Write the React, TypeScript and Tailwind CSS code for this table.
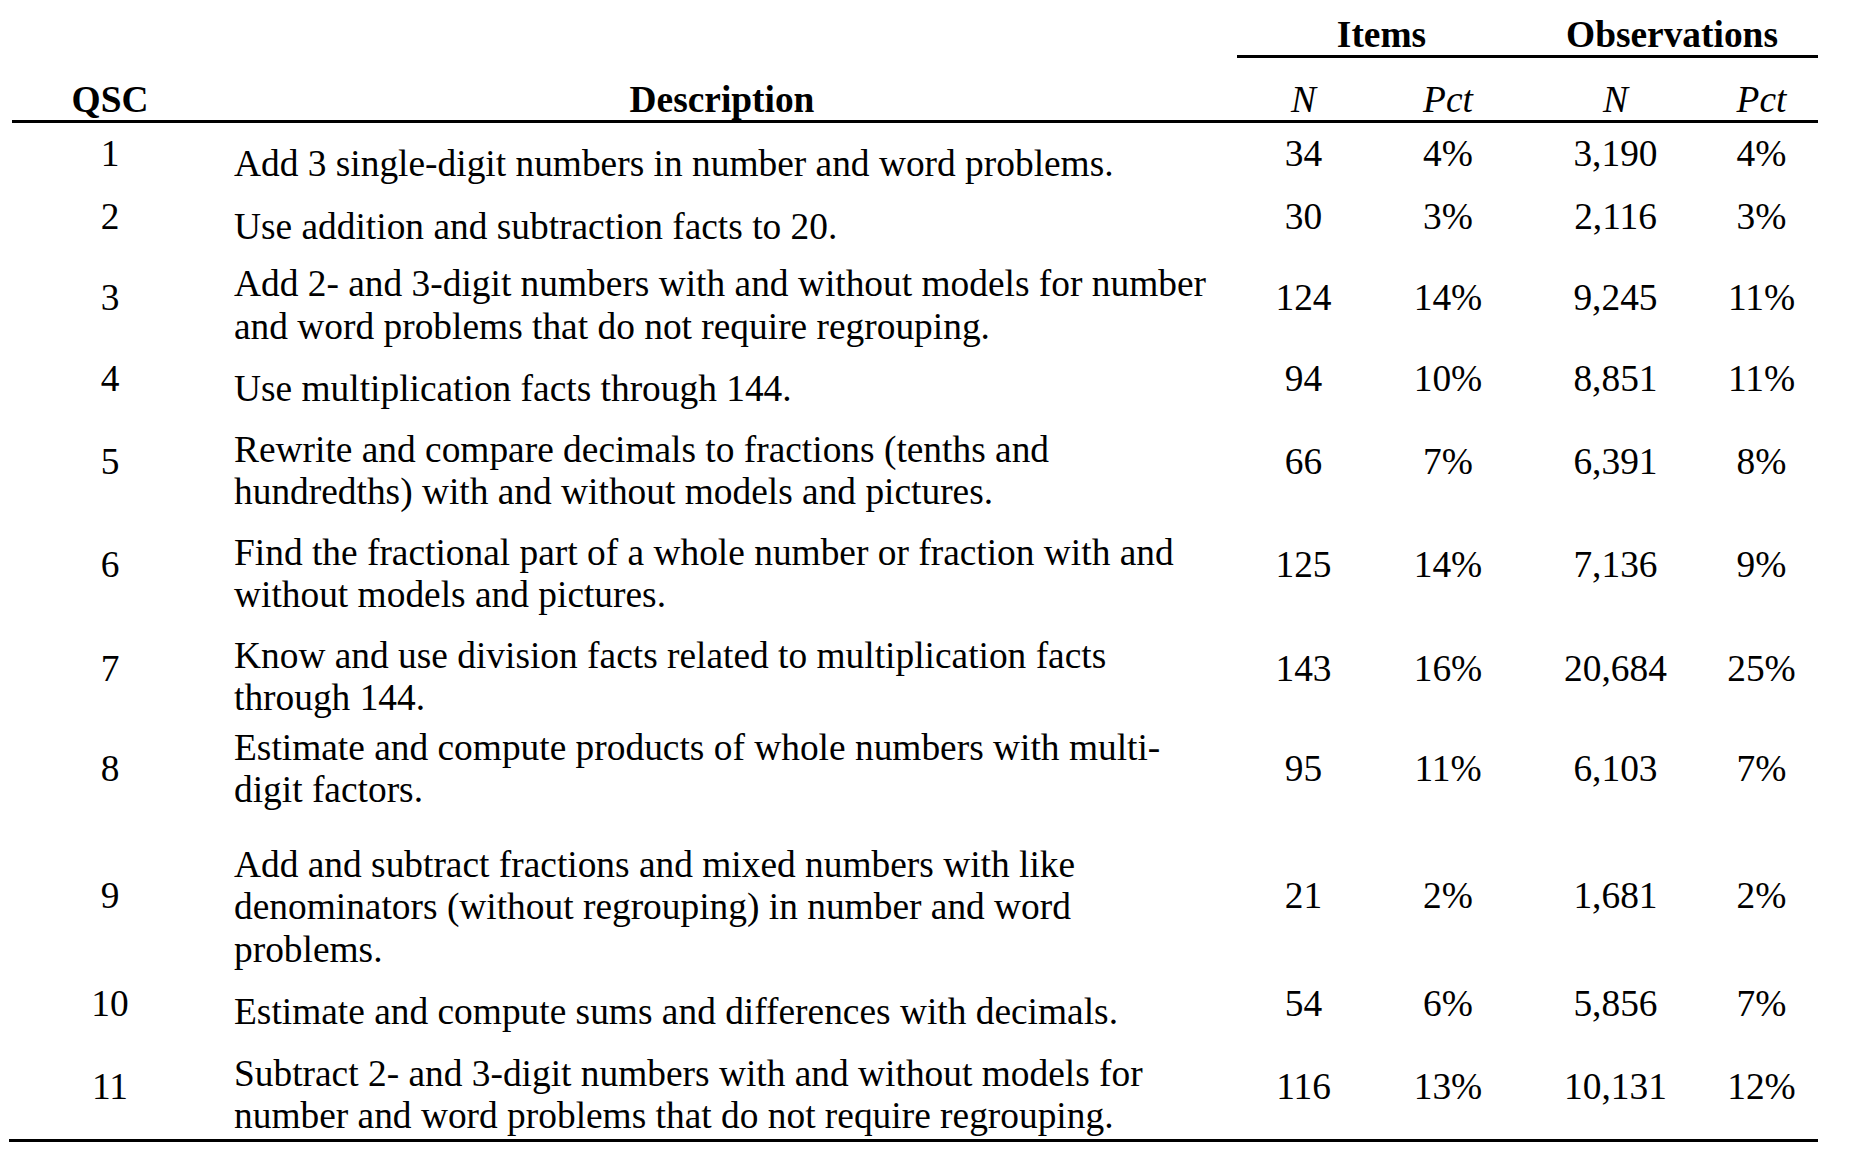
import React from 'react';

type Row = {
  qsc: string;
  lines: string[];
  vals: [string, string, string, string];
  descPad: string;
  numPad: string;
};

// padding-top per row, measured from the reference
const rows: Row[] = [
  { qsc: '1', lines: ['Add 3 single-digit numbers in number and word problems.'], vals: ['34', '4%', '3,190', '4%'], descPad: 'pt-[20px]', numPad: 'pt-[10px]' },
  { qsc: '2', lines: ['Use addition and subtraction facts to 20.'], vals: ['30', '3%', '2,116', '3%'], descPad: 'pt-[20px]', numPad: 'pt-[10px]' },
  {
    qsc: '3',
    lines: ['Add 2- and 3-digit numbers with and without models for number', 'and word problems that do not require regrouping.'],
    vals: ['124', '14%', '9,245', '11%'],
    descPad: 'pt-[15px]',
    numPad: 'pt-[29px]',
  },
  { qsc: '4', lines: ['Use multiplication facts through 144.'], vals: ['94', '10%', '8,851', '11%'], descPad: 'pt-[20px]', numPad: 'pt-[10px]' },
  {
    qsc: '5',
    lines: ['Rewrite and compare decimals to fractions (tenths and', 'hundredths) with and without models and pictures.'],
    vals: ['66', '7%', '6,391', '8%'],
    descPad: 'pt-[18px]',
    numPad: 'pt-[30px]',
  },
  {
    qsc: '6',
    lines: ['Find the fractional part of a whole number or fraction with and', 'without models and pictures.'],
    vals: ['125', '14%', '7,136', '9%'],
    descPad: 'pt-[18px]',
    numPad: 'pt-[30px]',
  },
  {
    qsc: '7',
    lines: ['Know and use division facts related to multiplication facts', 'through 144.'],
    vals: ['143', '16%', '20,684', '25%'],
    descPad: 'pt-[18px]',
    numPad: 'pt-[31px]',
  },
  {
    qsc: '8',
    lines: ['Estimate and compute products of whole numbers with multi-', 'digit factors.'],
    vals: ['95', '11%', '6,103', '7%'],
    descPad: 'pt-[7px]',
    numPad: 'pt-[28px]',
  },
  {
    qsc: '9',
    lines: ['Add and subtract fractions and mixed numbers with like', 'denominators (without regrouping) in number and word', 'problems.'],
    vals: ['21', '2%', '1,681', '2%'],
    descPad: 'pt-[32px]',
    numPad: 'pt-[63px]',
  },
  { qsc: '10', lines: ['Estimate and compute sums and differences with decimals.'], vals: ['54', '6%', '5,856', '7%'], descPad: 'pt-[20px]', numPad: 'pt-[12px]' },
  {
    qsc: '11',
    lines: ['Subtract 2- and 3-digit numbers with and without models for', 'number and word problems that do not require regrouping.'],
    vals: ['116', '13%', '10,131', '12%'],
    descPad: 'pt-[19px] pb-[1px]',
    numPad: 'pt-[32px]',
  },
];

const cols = 'grid grid-cols-[196px_1029px_133px_156px_179px_113px]';

export default function App() {
  return (
    <div className="w-[1853px] h-[1162px] bg-white text-black overflow-hidden font-['Liberation_Serif','Times_New_Roman',serif] text-[37.4px] leading-[42.5px]">
      <div className="ml-[12px] w-[1806px]">
        {/* group header */}
        <div className={`${cols} pt-[15px] font-bold leading-[40px]`}>
          <div className="col-span-2" />
          <div className="col-span-2 text-center border-b-[3px] border-black">Items</div>
          <div className="col-span-2 text-center border-b-[3px] border-black">Observations</div>
        </div>

        {/* column header */}
        <div className={`${cols} pt-[22px] leading-[40px] border-b-[3px] border-black`}>
          <div className="text-center font-bold">QSC</div>
          <div className="pl-[26px] pr-[27px] text-center font-bold">Description</div>
          <div className="text-center italic">N</div>
          <div className="text-center italic">Pct</div>
          <div className="text-center italic">N</div>
          <div className="text-center italic">Pct</div>
        </div>

        {/* body */}
        {rows.map((r) => (
          <div key={r.qsc} className={cols}>
            <div className={`text-center ${r.numPad}`}>{r.qsc}</div>
            <div className={`pl-[26px] whitespace-nowrap ${r.descPad}`}>
              {r.lines.map((l, i) => (
                <div key={i}>{l}</div>
              ))}
            </div>
            {r.vals.map((v, i) => (
              <div key={i} className={`text-center ${r.numPad}`}>
                {v}
              </div>
            ))}
          </div>
        ))}
      </div>
      <div className="ml-[9px] w-[1809px] border-t-[3px] border-black" />
    </div>
  );
}
